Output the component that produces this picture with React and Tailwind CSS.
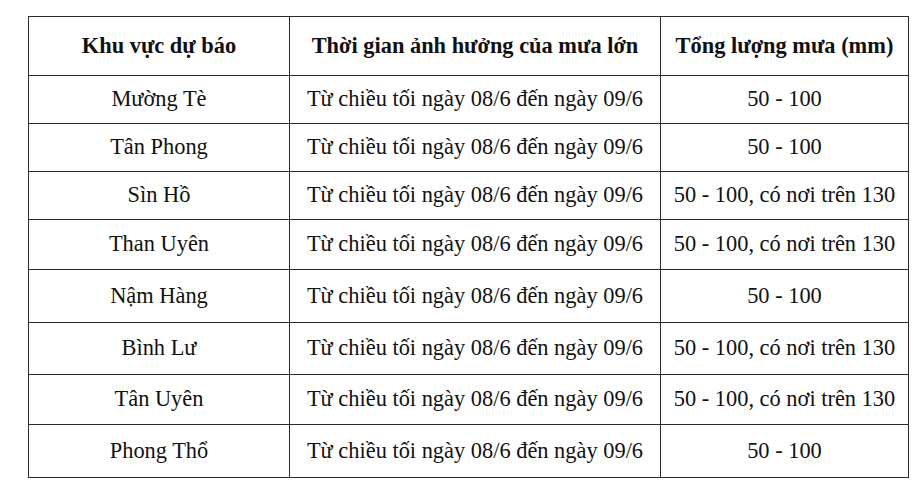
import React from 'react'

const rows = [
  ['Mường Tè', 'Từ chiều tối ngày 08/6 đến ngày 09/6', '50 - 100', 48],
  ['Tân Phong', 'Từ chiều tối ngày 08/6 đến ngày 09/6', '50 - 100', 48],
  ['Sìn Hồ', 'Từ chiều tối ngày 08/6 đến ngày 09/6', '50 - 100, có nơi trên 130', 48],
  ['Than Uyên', 'Từ chiều tối ngày 08/6 đến ngày 09/6', '50 - 100, có nơi trên 130', 50],
  ['Nậm Hàng', 'Từ chiều tối ngày 08/6 đến ngày 09/6', '50 - 100', 53],
  ['Bình Lư', 'Từ chiều tối ngày 08/6 đến ngày 09/6', '50 - 100, có nơi trên 130', 52],
  ['Tân Uyên', 'Từ chiều tối ngày 08/6 đến ngày 09/6', '50 - 100, có nơi trên 130', 50],
  ['Phong Thổ', 'Từ chiều tối ngày 08/6 đến ngày 09/6', '50 - 100', 53],
]

function App() {
  return (
    <div
      className="w-[922px] h-[495px] bg-white pt-[16px] pl-[28px]"
      style={{ fontFamily: '"Liberation Serif", "Times New Roman", serif' }}
    >
      <table className="w-[880px] border-collapse text-[22.4px] leading-none text-[#111] table-fixed">
        <colgroup>
          <col className="w-[261px]" />
          <col className="w-[371px]" />
          <col className="w-[248px]" />
        </colgroup>
        <thead>
          <tr className="h-[59px]">
            <th className="border-[1.5px] border-[#2a2a2a] text-center font-bold">Khu vực dự báo</th>
            <th className="border-[1.5px] border-[#2a2a2a] text-center font-bold">Thời gian ảnh hưởng của mưa lớn</th>
            <th className="border-[1.5px] border-[#2a2a2a] text-center font-bold">Tổng lượng mưa (mm)</th>
          </tr>
        </thead>
        <tbody>
          {rows.map(([area, time, amount, h]) => (
            <tr key={area} style={{ height: h }}>
              <td className="border-[1.5px] border-[#2a2a2a] text-center">{area}</td>
              <td className="border-[1.5px] border-[#2a2a2a] text-center">{time}</td>
              <td className="border-[1.5px] border-[#2a2a2a] text-center">{amount}</td>
            </tr>
          ))}
        </tbody>
      </table>
    </div>
  )
}

export default App
